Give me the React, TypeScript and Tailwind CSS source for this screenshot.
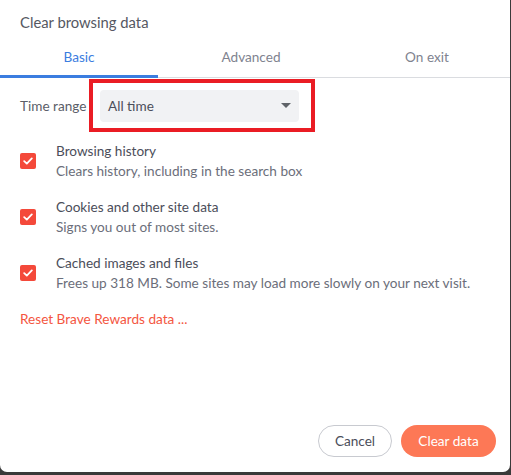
import React from "react";

function Check() {
  return (
    <div className="w-4 h-4 rounded-[2px] bg-[#f4493a] flex items-center justify-center shrink-0">
      <svg width="10" height="8" viewBox="0 0 10 8" fill="none">
        <path d="M1.2 4.2 L3.8 6.6 L8.8 1.4" stroke="white" strokeWidth="1.8" strokeLinecap="round" strokeLinejoin="round" />
      </svg>
    </div>
  );
}

function Item({ title, desc }: { title: string; desc: string }) {
  return (
    <div className="flex items-center h-[56px]">
      <div className="w-[36px] flex"><Check /></div>
      <div className="flex flex-col">
        <div className="text-[13.6px] leading-[20px] text-[#4b4e5a]">{title}</div>
        <div className="text-[13.6px] leading-[20px] text-[#6b6e7a]">{desc}</div>
      </div>
    </div>
  );
}

export default function App() {
  return (
    <div className="w-[511px] h-[475px] bg-[#3a3a3a] overflow-hidden" style={{ fontFamily: "Lato, 'Noto Sans', sans-serif" }}>
      <div className="w-[510px] h-[472px] bg-white rounded-b-[7px] flex flex-col">
        <div className="h-[44px] pl-[20px] flex items-center text-[14.8px] text-[#555862]">Clear browsing data</div>
        <div className="flex h-[34px] border-b border-[#dadce0] text-[13.6px]">
          <div className="w-[158px] flex items-start justify-center text-[#3b7de0] border-b-[3px] border-[#3b7de0] -mb-px pt-[3px]">Basic</div>
          <div className="w-[186px] flex items-start justify-center text-[#80838f] pt-[3px]">Advanced</div>
          <div className="flex-1 flex items-start justify-center text-[#80838f] pt-[3px]">On exit</div>
        </div>
        <div className="flex items-center h-[54px] mt-[1px] pl-[20px] relative">
          <div className="text-[13.6px] text-[#5b5e68] w-[80px] whitespace-nowrap">Time range</div>
          <div className="w-[199px] h-[32px] bg-[#f1f2f4] rounded-[4px] flex items-center justify-between px-[8px] text-[13.6px] text-[#4b4e5a]">
            <span>All time</span>
            <svg width="10" height="6" viewBox="0 0 10 6"><path d="M0 0 L10 0 L5 5 Z" fill="#5f6368" /></svg>
          </div>
          <div className="absolute left-[89px] top-0 w-[226px] h-[53px] border-[4px] border-[#ea1c24]" />
        </div>
        <div className="pl-[20px] flex flex-col">
          <Item title="Browsing history" desc="Clears history, including in the search box" />
          <Item title="Cookies and other site data" desc="Signs you out of most sites." />
          <Item title="Cached images and files" desc="Frees up 318 MB. Some sites may load more slowly on your next visit." />
        </div>
        <div className="pl-[20px] mt-[8px] text-[13.6px] text-[#f4563f] leading-[20px]">Reset Brave Rewards data ...</div>
        <div className="flex-1" />
        <div className="flex justify-end gap-[9px] pr-[14px] pb-[15px]">
          <button className="w-[74px] h-[32px] rounded-full border border-[#c8cad0] text-[13.6px] text-[#4b4e5a] bg-white">Cancel</button>
          <button className="w-[95px] h-[32px] rounded-full bg-[#fd7856] text-[13.6px] text-white">Clear data</button>
        </div>
      </div>
    </div>
  );
}
